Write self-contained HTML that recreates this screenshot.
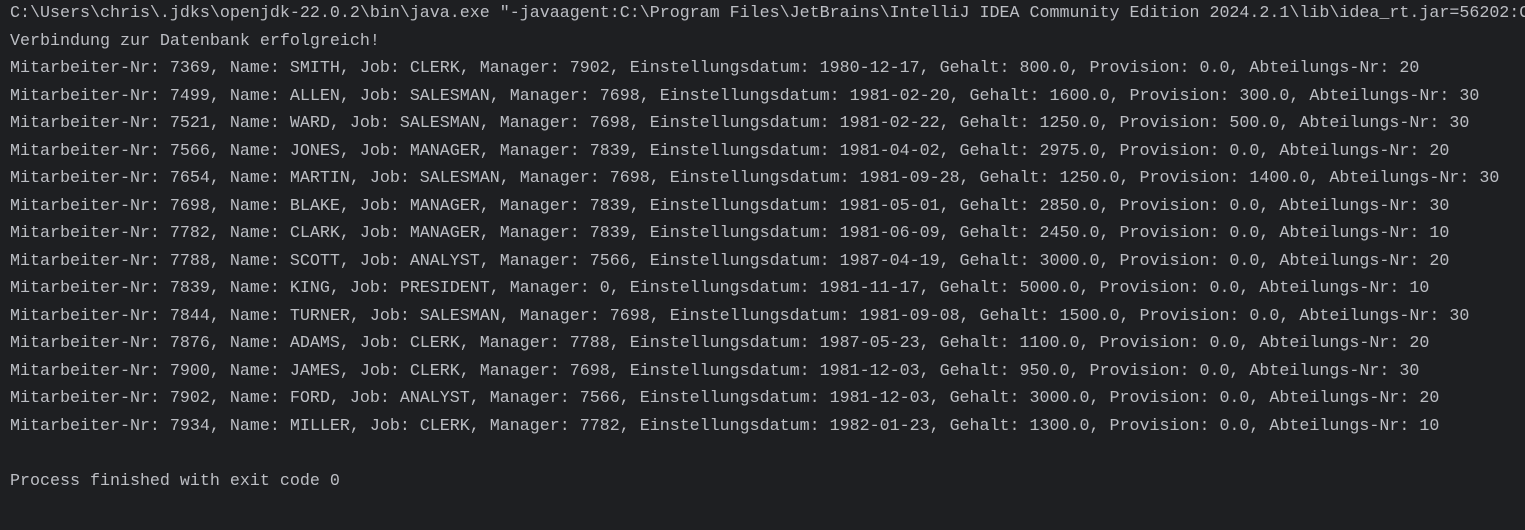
<!DOCTYPE html>
<html><head><meta charset="utf-8"><style>
html,body{margin:0;padding:0;background:#1e1f22;width:1525px;height:530px;overflow:hidden}
pre{margin:0;padding:0 0 0 10px;font-family:"Liberation Mono",monospace;font-size:16.67px;line-height:27.5px;color:#bcbec4;white-space:pre}
</style></head><body><pre>C:\Users\chris\.jdks\openjdk-22.0.2\bin\java.exe "-javaagent:C:\Program Files\JetBrains\IntelliJ IDEA Community Edition 2024.2.1\lib\idea_rt.jar=56202:C
Verbindung zur Datenbank erfolgreich!
Mitarbeiter-Nr: 7369, Name: SMITH, Job: CLERK, Manager: 7902, Einstellungsdatum: 1980-12-17, Gehalt: 800.0, Provision: 0.0, Abteilungs-Nr: 20
Mitarbeiter-Nr: 7499, Name: ALLEN, Job: SALESMAN, Manager: 7698, Einstellungsdatum: 1981-02-20, Gehalt: 1600.0, Provision: 300.0, Abteilungs-Nr: 30
Mitarbeiter-Nr: 7521, Name: WARD, Job: SALESMAN, Manager: 7698, Einstellungsdatum: 1981-02-22, Gehalt: 1250.0, Provision: 500.0, Abteilungs-Nr: 30
Mitarbeiter-Nr: 7566, Name: JONES, Job: MANAGER, Manager: 7839, Einstellungsdatum: 1981-04-02, Gehalt: 2975.0, Provision: 0.0, Abteilungs-Nr: 20
Mitarbeiter-Nr: 7654, Name: MARTIN, Job: SALESMAN, Manager: 7698, Einstellungsdatum: 1981-09-28, Gehalt: 1250.0, Provision: 1400.0, Abteilungs-Nr: 30
Mitarbeiter-Nr: 7698, Name: BLAKE, Job: MANAGER, Manager: 7839, Einstellungsdatum: 1981-05-01, Gehalt: 2850.0, Provision: 0.0, Abteilungs-Nr: 30
Mitarbeiter-Nr: 7782, Name: CLARK, Job: MANAGER, Manager: 7839, Einstellungsdatum: 1981-06-09, Gehalt: 2450.0, Provision: 0.0, Abteilungs-Nr: 10
Mitarbeiter-Nr: 7788, Name: SCOTT, Job: ANALYST, Manager: 7566, Einstellungsdatum: 1987-04-19, Gehalt: 3000.0, Provision: 0.0, Abteilungs-Nr: 20
Mitarbeiter-Nr: 7839, Name: KING, Job: PRESIDENT, Manager: 0, Einstellungsdatum: 1981-11-17, Gehalt: 5000.0, Provision: 0.0, Abteilungs-Nr: 10
Mitarbeiter-Nr: 7844, Name: TURNER, Job: SALESMAN, Manager: 7698, Einstellungsdatum: 1981-09-08, Gehalt: 1500.0, Provision: 0.0, Abteilungs-Nr: 30
Mitarbeiter-Nr: 7876, Name: ADAMS, Job: CLERK, Manager: 7788, Einstellungsdatum: 1987-05-23, Gehalt: 1100.0, Provision: 0.0, Abteilungs-Nr: 20
Mitarbeiter-Nr: 7900, Name: JAMES, Job: CLERK, Manager: 7698, Einstellungsdatum: 1981-12-03, Gehalt: 950.0, Provision: 0.0, Abteilungs-Nr: 30
Mitarbeiter-Nr: 7902, Name: FORD, Job: ANALYST, Manager: 7566, Einstellungsdatum: 1981-12-03, Gehalt: 3000.0, Provision: 0.0, Abteilungs-Nr: 20
Mitarbeiter-Nr: 7934, Name: MILLER, Job: CLERK, Manager: 7782, Einstellungsdatum: 1982-01-23, Gehalt: 1300.0, Provision: 0.0, Abteilungs-Nr: 10

Process finished with exit code 0
</pre></body></html>
